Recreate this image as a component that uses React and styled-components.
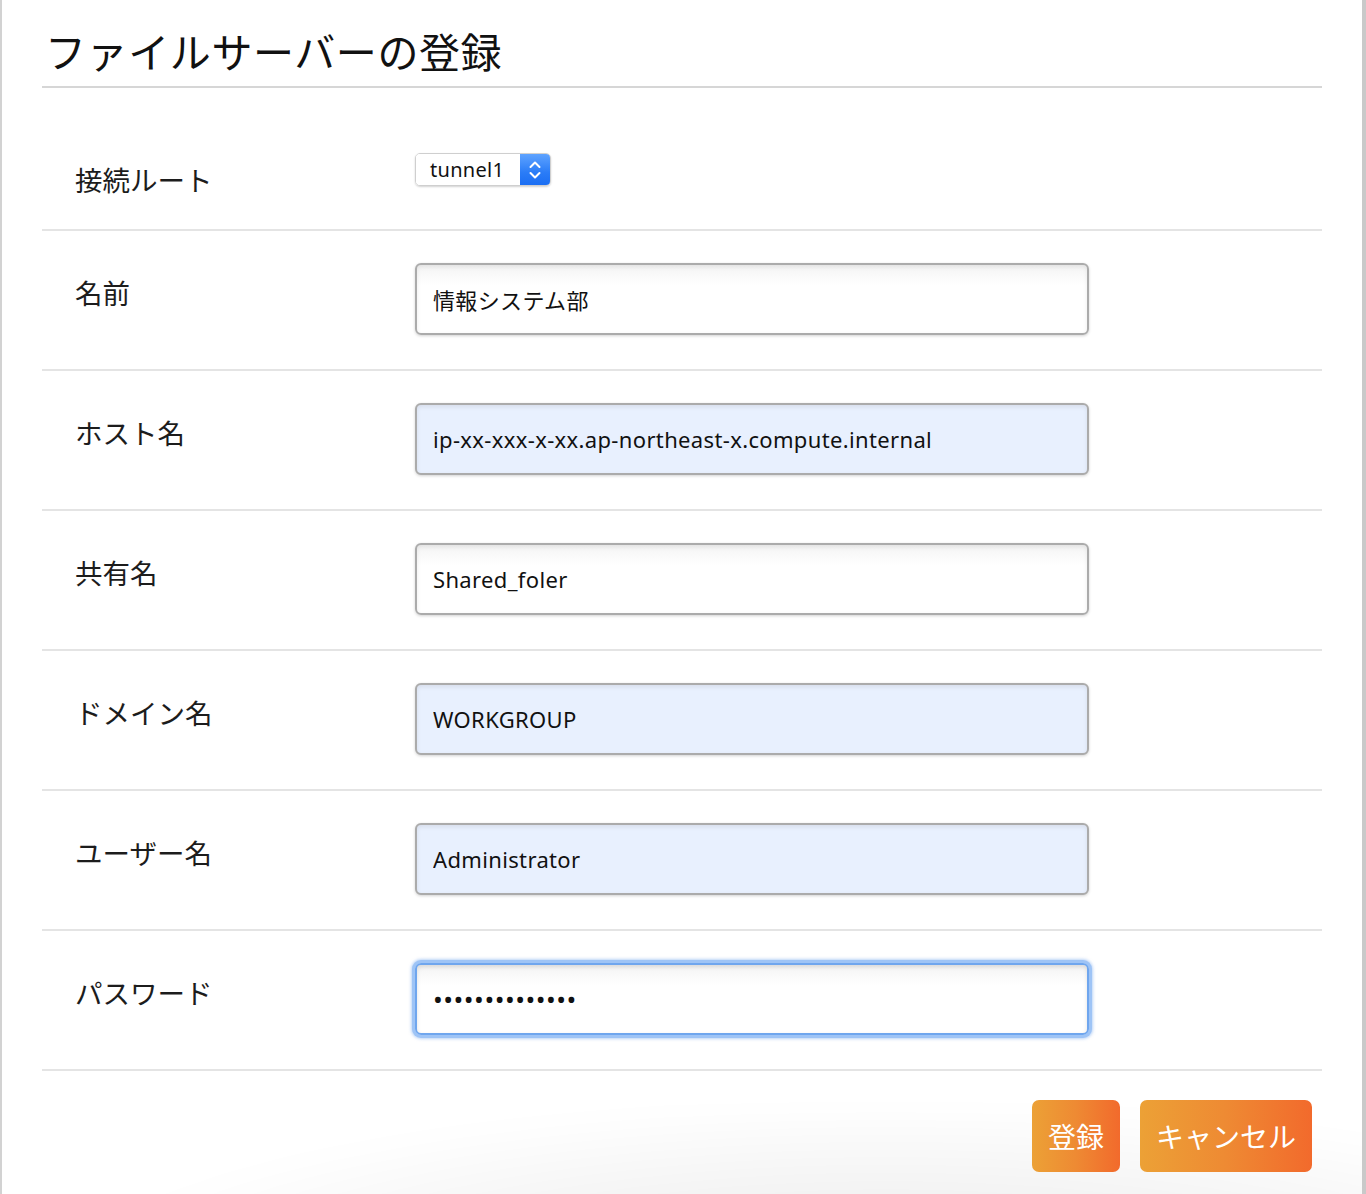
import React from "react";
import styled, { createGlobalStyle } from "styled-components";

const GlobalStyle = createGlobalStyle`
  html, body {
    margin: 0;
    padding: 0;
    background: #ffffff;
  }
  body {
    font-family: "Noto Sans CJK JP", "Noto Sans", sans-serif;
    color: #1a1a1a;
  }
`;

const Frame = styled.div`
  box-sizing: border-box;
  height: 1194px;
  border-left: 2px solid #d2d2d2;
  border-right: 4px solid #c9c9c9;
  background: #ffffff;
  display: flex;
  flex-direction: column;
  overflow: hidden;
`;

const Content = styled.div`
  margin: 0 40px 0 40px;
  display: flex;
  flex-direction: column;
`;

const Title = styled.h1`
  margin: 0;
  height: 88px;
  box-sizing: border-box;
  padding: 22px 0 0 3px;
  font-size: 41px;
  font-weight: 400;
  line-height: 56px;
  color: #111;
  border-bottom: 2px solid #d6d6d6;
  letter-spacing: 0.6px;
`;

const Row = styled.div`
  box-sizing: border-box;
  height: ${(p) => p.$height}px;
  display: flex;
  align-items: flex-start;
  border-bottom: 2px solid #e4e4e4;
`;

const Label = styled.div`
  width: 373px;
  box-sizing: border-box;
  padding-left: 33px;
  padding-top: ${(p) => p.$top}px;
  font-size: 27.5px;
  line-height: 40px;
  color: #1c1c1c;
`;

const Field = styled.div`
  padding-top: ${(p) => p.$top}px;
`;

const TextInput = styled.input`
  box-sizing: border-box;
  width: 674px;
  height: 72px;
  padding: 0 16px;
  font-family: "Noto Sans", "Noto Sans CJK JP", sans-serif;
  font-size: 22px;
  letter-spacing: 0.35px;
  color: #111;
  border: 2px solid ${(p) => (p.$focused ? "#6fa6ee" : "#ababab")};
  border-radius: 6px;
  outline: none;
  background: ${(p) =>
    p.$autofill
      ? "#e8f0fe"
      : "linear-gradient(180deg, #f4f4f4 0%, #ffffff 30%, #ffffff 100%)"};
  box-shadow: ${(p) =>
    p.$focused
      ? "0 0 0 3px #9ec4f6, 0 0 3px 4px rgba(120,170,240,0.5), inset 0 2px 4px rgba(0,0,0,0.12)"
      : "0 1px 3px rgba(0,0,0,0.18), inset 0 2px 4px rgba(0,0,0,0.08)"};
  &[type="password"] {
    font-size: 26px;
    letter-spacing: 0.5px;
  }
`;

const Select = styled.div`
  display: flex;
  width: 136px;
  height: 33px;
  box-sizing: border-box;
  border: 1px solid #cfcfcf;
  border-radius: 5px;
  overflow: hidden;
  box-shadow: 0 1px 2px rgba(0, 0, 0, 0.18);
  font-family: "Noto Sans", "Noto Sans CJK JP", sans-serif;
`;

const SelectValue = styled.div`
  flex: 1;
  padding-left: 14px;
  font-size: 20px;
  line-height: 31px;
  letter-spacing: 0.3px;
  color: #111;
  background: #ffffff;
`;

const SelectArrow = styled.div`
  width: 30px;
  display: flex;
  align-items: center;
  justify-content: center;
  background: linear-gradient(180deg, #5ea3ff 0%, #2a7cf7 60%, #1b6ef3 100%);
`;

const Footer = styled.div`
  position: relative;
  flex: 1;
  display: flex;
  justify-content: flex-end;
  align-items: flex-start;
  gap: 20px;
  padding: 29px 50px 0 0;
  &::before {
    content: "";
    position: absolute;
    left: 80px;
    right: -60px;
    top: 40px;
    bottom: -80px;
    border-radius: 140px 0 0 0;
    background: radial-gradient(
      ellipse at 60% 110%,
      rgba(0, 0, 0, 0.09) 0%,
      rgba(0, 0, 0, 0.04) 45%,
      rgba(0, 0, 0, 0) 75%
    );
    filter: blur(12px);
  }
`;

const Button = styled.button`
  position: relative;
  height: 72px;
  padding: 0 ${(p) => (p.$wide ? 16 : 16)}px;
  border: none;
  border-radius: 7px;
  font-family: "Noto Sans CJK JP", sans-serif;
  font-size: 28px;
  color: #ffffff;
  background: linear-gradient(90deg, #eca136 0%, #ee8a33 50%, #f26a2c 100%);
  cursor: pointer;
`;

const rows = [
  { label: "名前", value: "情報システム部" },
  { label: "ホスト名", value: "ip-xx-xxx-x-xx.ap-northeast-x.compute.internal", autofill: true },
  { label: "共有名", value: "Shared_foler" },
  { label: "ドメイン名", value: "WORKGROUP", autofill: true },
  { label: "ユーザー名", value: "Administrator", autofill: true },
  { label: "パスワード", value: "aaaaaaaaaaaaaa", password: true, focused: true },
];

const Chevrons = () => (
  <svg width="14" height="22" viewBox="0 0 14 22" fill="none">
    <path d="M2.5 8 L7 3.5 L11.5 8" stroke="#fff" strokeWidth="2" strokeLinecap="round" strokeLinejoin="round" />
    <path d="M2.5 14 L7 18.5 L11.5 14" stroke="#fff" strokeWidth="2" strokeLinecap="round" strokeLinejoin="round" />
  </svg>
);

export default function App() {
  return (
    <>
      <GlobalStyle />
      <Frame>
        <Content>
          <Title>ファイルサーバーの登録</Title>
          <Row $height={143}>
            <Label $top={71}>接続ルート</Label>
            <Field $top={65}>
              <Select>
                <SelectValue>tunnel1</SelectValue>
                <SelectArrow>
                  <Chevrons />
                </SelectArrow>
              </Select>
            </Field>
          </Row>
          {rows.map((r) => (
            <Row key={r.label} $height={140}>
              <Label $top={41}>{r.label}</Label>
              <Field $top={32}>
                <TextInput
                  type={r.password ? "password" : "text"}
                  defaultValue={r.value}
                  readOnly
                  $autofill={r.autofill}
                  $focused={r.focused}
                />
              </Field>
            </Row>
          ))}
        </Content>
        <Footer>
          <Button>登録</Button>
          <Button $wide>キャンセル</Button>
        </Footer>
      </Frame>
    </>
  );
}
